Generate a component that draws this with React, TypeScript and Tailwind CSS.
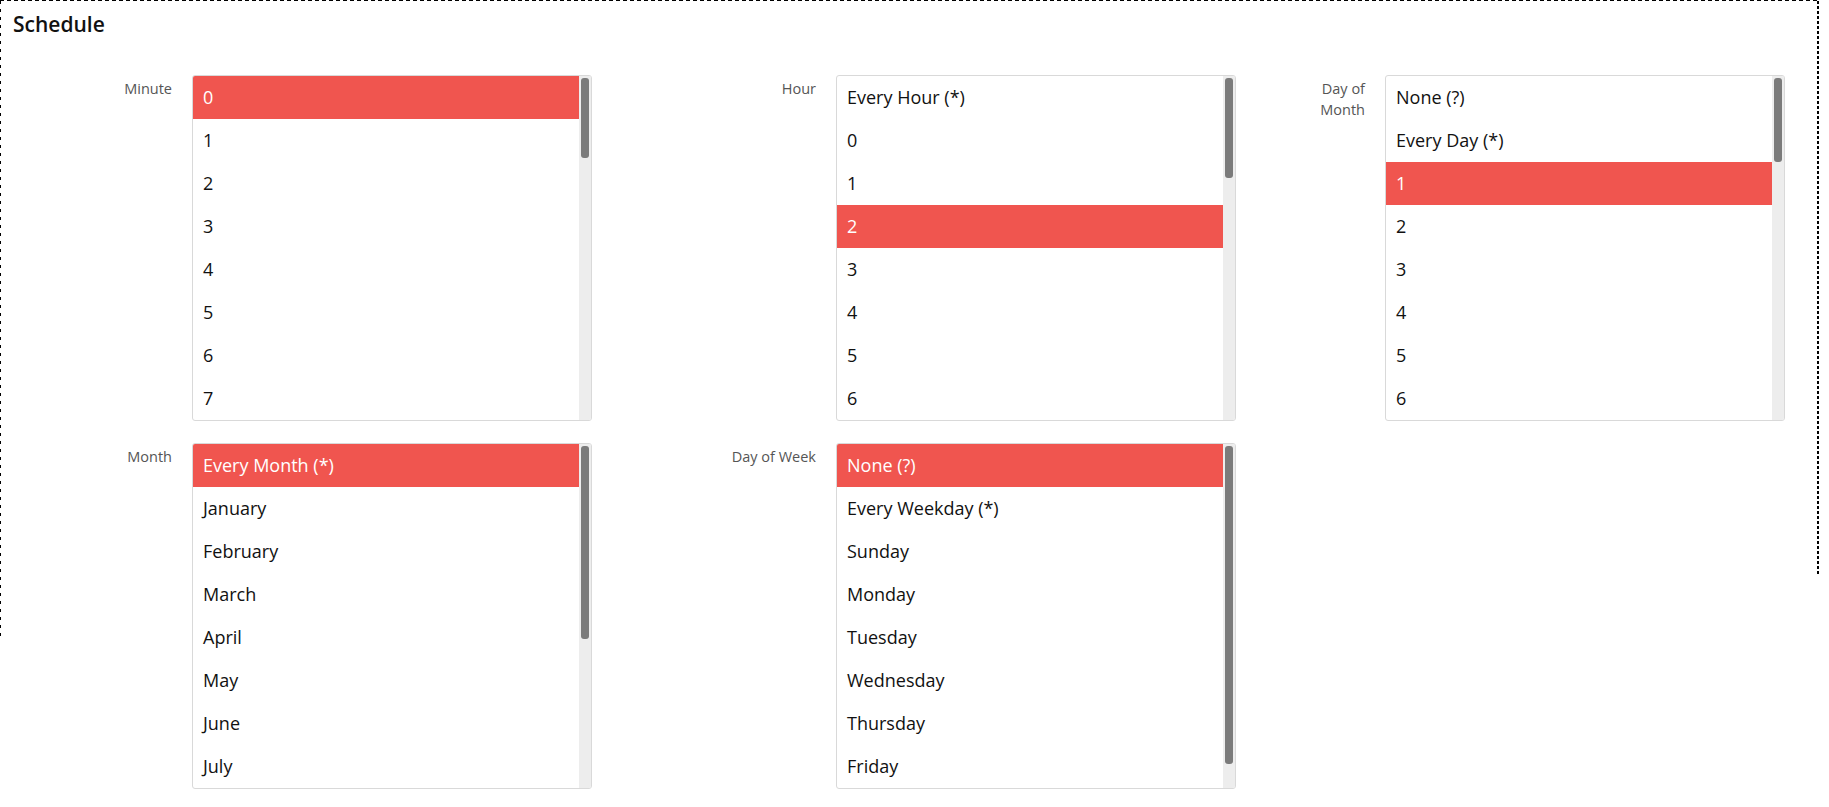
import clsx from "clsx";

interface ListBoxProps {
  items: string[];
  selected: string;
  thumb: string;
}

function ListBox({ items, selected, thumb }: ListBoxProps) {
  return (
    <div className="flex h-[346px] w-[400px] overflow-hidden rounded-[3px] border border-[#d9d9d9] bg-white">
      <div className="flex-1 overflow-hidden">
        {items.map((item) => (
          <div
            key={item}
            className={clsx(
              "h-[43px] whitespace-nowrap pl-[10px] text-[18px] leading-[43px]",
              item === selected ? "bg-[#f0554f] text-white" : "text-[#111111]"
            )}
          >
            {item}
          </div>
        ))}
      </div>
      <div className="w-[12px] shrink-0 bg-[#ededed] px-[2px] pt-[2px]">
        <div className={clsx("rounded-[3px] bg-[#7b7b7b]", thumb)} />
      </div>
    </div>
  );
}

function Label({ text, narrow }: { text: string; narrow?: boolean }) {
  return (
    <div className="flex justify-end">
      <div
        className={clsx(
          "pt-[3px] text-right text-[14.5px] leading-[21px] text-[#555555]",
          narrow && "w-[50px]"
        )}
      >
        {text}
      </div>
    </div>
  );
}

const range = (from: number, to: number) =>
  Array.from({ length: to - from + 1 }, (_, i) => String(from + i));

const minutes = range(0, 59);
const hours = ["Every Hour (*)", ...range(0, 23)];
const daysOfMonth = ["None (?)", "Every Day (*)", ...range(1, 31)];
const months = [
  "Every Month (*)",
  "January",
  "February",
  "March",
  "April",
  "May",
  "June",
  "July",
  "August",
  "September",
  "October",
  "November",
  "December",
];
const daysOfWeek = [
  "None (?)",
  "Every Weekday (*)",
  "Sunday",
  "Monday",
  "Tuesday",
  "Wednesday",
  "Thursday",
  "Friday",
  "Saturday",
];

export default function App() {
  return (
    <div className="min-h-screen bg-white font-['Open_Sans',sans-serif]">
      <div className="w-[1819px]">
        {/* dashed top edge */}
        <div className="h-px w-full bg-[repeating-linear-gradient(to_right,#000_0_4px,transparent_4px_7px)]" />
        <div className="flex">
          {/* dashed left edge */}
          <div className="h-[637px] w-px shrink-0 bg-[repeating-linear-gradient(to_bottom,#000_0_3px,transparent_3px_8px)]" />

          <div className="h-[637px] flex-1">
            {/* TITLE */}
            <h2 className="mb-[37px] pl-[12px] pt-[9px] text-[21px] font-semibold leading-[28px] text-[#111111]">
              Schedule
            </h2>

            {/* FIELDS GRID */}
            <div className="grid grid-cols-[171px_400px_204px_400px_109px_400px] gap-x-5 gap-y-[22px]">
              <Label text="Minute" />
              <ListBox items={minutes} selected="0" thumb="h-[80px]" />
              <Label text="Hour" />
              <ListBox items={hours} selected="2" thumb="h-[100px]" />
              <Label text="Day of Month" narrow />
              <ListBox items={daysOfMonth} selected="1" thumb="h-[84px]" />

              <Label text="Month" />
              <ListBox items={months} selected="Every Month (*)" thumb="h-[193px]" />
              <Label text="Day of Week" />
              <ListBox items={daysOfWeek} selected="None (?)" thumb="h-[318px]" />
            </div>
          </div>

          {/* dotted right edge */}
          <div className="h-[574px] w-[2px] shrink-0 bg-[repeating-linear-gradient(to_bottom,#000_0_3px,transparent_3px_5px)]" />
        </div>
      </div>
    </div>
  );
}
